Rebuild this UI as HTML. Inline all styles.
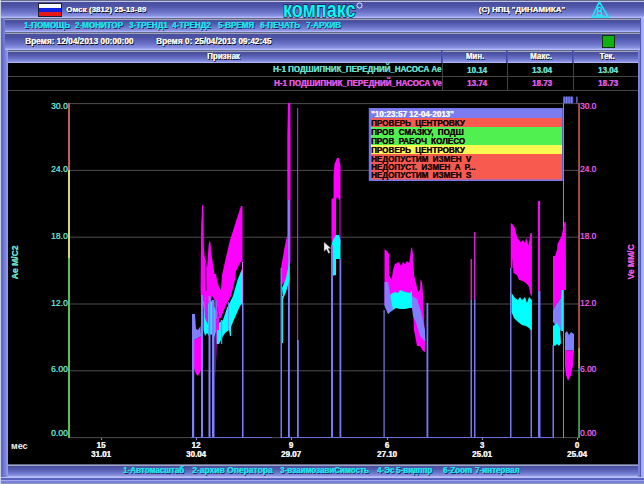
<!DOCTYPE html>
<html><head><meta charset="utf-8">
<style>
html,body{margin:0;padding:0;}
body{width:644px;height:484px;overflow:hidden;position:relative;background:#6c72c8;font-family:"Liberation Sans",sans-serif;}
.a{position:absolute;}
.band{background:linear-gradient(to bottom,#646a8c 0px,#646a8c 1px,#9ea2ba 1px,#9ea2ba 2px,#4a509c 2px,#4c52a4 30%,#6a72c8 65%,#8890e0 88%,#a8b0f6 94%,#b8c0fa 100%);}
.t{position:absolute;white-space:pre;font-weight:bold;line-height:1;font-size:9px;transform:scaleX(.89);transform-origin:0 0;}
.s8{font-size:8px;transform:none;}
.wh{color:#f4f4f4;text-shadow:0.3px 0 0 #f4f4f4,1px 1px 0 #080810,-0.5px 0 0 #202030;}
.cy{color:#20e0ea;text-shadow:0.4px 0 0 #20e0ea,1px 1px 0 #1c2460;}
.lc{color:#64dccc;}
.t.lc,.t.mg{text-shadow:0.35px 0 0 currentColor;}
.mg{color:#e058e0;}
.ax{position:absolute;white-space:pre;line-height:1;font-size:9px;text-shadow:0.3px 0 0 currentColor;}
.xl{position:absolute;white-space:pre;line-height:1;font-size:9px;font-weight:bold;color:#f0f0f0;text-shadow:0.3px 0 0 #f0f0f0;width:40px;text-align:center;transform:scaleX(.89);}
.lg{position:absolute;white-space:pre;line-height:1;font-size:9px;font-weight:bold;color:#1a0606;left:370.5px;word-spacing:2.2px;transform:scaleX(.9);transform-origin:0 0;text-shadow:0.2px 0 0 #1a0606;}
</style></head><body>
<!-- left/right frame -->

<div class="a" style="left:1px;top:0;width:7px;height:484px;background:linear-gradient(to right,#5a60c4,#7a80dc 60%,#9aa0ee)"></div>
<div class="a" style="left:638px;top:0;width:6px;height:484px;background:linear-gradient(to right,#8088de 0,#7078d4 2px,#5058b8 2px,#5058b8 3px,#a0a8f2 3px,#b0b8f6 100%)"></div>
<div class="a" style="left:0;top:0;width:1px;height:484px;background:#c8d0dc;z-index:5"></div>
<!-- top band -->
<div class="a band" style="left:0;top:0;width:644px;height:18px"></div>
<div class="a" style="left:0;top:1px;width:644px;height:1px;background:#c0c4e4"></div>
<!-- menu band -->
<div class="a band" style="left:5px;top:18px;width:635px;height:14px"></div>
<!-- time band -->
<div class="a band" style="left:5px;top:32px;width:635px;height:18px"></div>
<!-- table header band -->
<div class="a band" style="left:8px;top:50px;width:630px;height:13px"></div>


<svg class="a" style="left:0;top:0" width="644" height="20" viewBox="0 0 644 20">
<text x="283" y="17" font-family="Liberation Sans" font-weight="bold" font-size="22" textLength="72.5" lengthAdjust="spacingAndGlyphs" fill="#10f4f4" stroke="#141a48" stroke-width="1.6" paint-order="stroke">компакс</text>
<circle cx="359.5" cy="5.5" r="2.6" fill="none" stroke="#e0f8ff" stroke-width="0.9"/>
<polygon points="599.4,1.8 608.4,17.3 592,17.3" fill="none" stroke="#20e4f4" stroke-width="1.6"/>
<circle cx="599.4" cy="9.2" r="1.9" fill="none" stroke="#20eaf2" stroke-width="1.3"/>
<circle cx="599.4" cy="13" r="2.2" fill="none" stroke="#20eaf2" stroke-width="1.3"/>
<rect x="595.5" y="15" width="8" height="1.5" fill="#20eaf2"/>
</svg>
<!-- flag -->
<div class="a" style="left:38px;top:3px;width:24px;height:14px;background:#202030"></div>
<div class="a" style="left:39px;top:4px;width:22px;height:4px;background:#f8f8f8"></div>
<div class="a" style="left:39px;top:8px;width:22px;height:4px;background:#1020e0"></div>
<div class="a" style="left:39px;top:12px;width:22px;height:4px;background:#e81818"></div>

<div class="t wh s8" style="left:66px;top:6px;">Омск (3812) 25-13-89</div>
<div class="t wh s8" style="left:478.5px;top:6px;">(С) НПЦ "ДИНАМИКА"</div>
<div class="t cy" style="left:24px;top:21px;">1-ПОМОЩЬ</div>
<div class="t cy" style="left:75px;top:21px;">2-МОНИТОР</div>
<div class="t cy" style="left:129px;top:21px;">3-ТРЕНД1</div>
<div class="t cy" style="left:172px;top:21px;">4-ТРЕНД2</div>
<div class="t cy" style="left:218px;top:21px;">5-ВРЕМЯ</div>
<div class="t cy" style="left:260px;top:21px;">6-ПЕЧАТЬ</div>
<div class="t cy" style="left:306px;top:21px;">7-АРХИВ</div>
<div class="t wh" style="left:25px;top:37px;transform:scaleX(.92);">Время: 12/04/2013 00:00:00</div>
<div class="t wh" style="left:156px;top:37px;transform:scaleX(.92);">Время 0: 25/04/2013 09:42:45</div>
<div class="a" style="left:602px;top:35px;width:13px;height:13px;background:#103010"></div>
<div class="a" style="left:603px;top:36px;width:11px;height:11px;background:#10b010"></div>

<!-- table -->
<div class="a" style="left:8px;top:63px;width:630px;height:28px;background:#000"></div>
<div class="a" style="left:8px;top:76px;width:630px;height:1px;background:#444"></div>
<div class="a" style="left:8px;top:90px;width:630px;height:1px;background:#444"></div>
<div class="a" style="left:441px;top:50px;width:2px;height:13px;background:linear-gradient(to right,#3c42a0,#5a62c0)"></div><div class="a" style="left:442px;top:63px;width:1px;height:28px;background:#444"></div>
<div class="a" style="left:506px;top:50px;width:2px;height:13px;background:linear-gradient(to right,#3c42a0,#5a62c0)"></div><div class="a" style="left:507px;top:63px;width:1px;height:28px;background:#444"></div>
<div class="a" style="left:572px;top:50px;width:2px;height:13px;background:linear-gradient(to right,#3c42a0,#5a62c0)"></div><div class="a" style="left:573px;top:63px;width:1px;height:28px;background:#444"></div>
<div class="t wh" style="left:207px;top:52px;">Признак</div>
<div class="t wh" style="left:443px;top:52px;width:64px;text-align:center;transform-origin:50% 0;">Мин.</div>
<div class="t wh" style="left:509px;top:52px;width:64px;text-align:center;transform-origin:50% 0;">Макс.</div>
<div class="t wh" style="left:575px;top:52px;width:64px;text-align:center;transform-origin:50% 0;">Тек.</div>
<div class="t lc" style="left:272.5px;top:64.5px;transform:scaleX(.885);">Н-1 ПОДШИПНИК_ПЕРЕДНИЙ_НАСОСА Ae</div>
<div class="t mg" style="left:273.5px;top:78.5px;transform:scaleX(.885);">Н-1 ПОДШИПНИК_ПЕРЕДНИЙ_НАСОСА Ve</div>
<div class="t lc" style="left:445px;top:65.5px;width:64px;text-align:center;transform-origin:50% 0;">10.14</div>
<div class="t lc" style="left:510px;top:65.5px;width:64px;text-align:center;transform-origin:50% 0;">13.04</div>
<div class="t lc" style="left:576px;top:65.5px;width:64px;text-align:center;transform-origin:50% 0;">13.04</div>
<div class="t mg" style="left:445px;top:78.5px;width:64px;text-align:center;transform-origin:50% 0;">13.74</div>
<div class="t mg" style="left:510px;top:78.5px;width:64px;text-align:center;transform-origin:50% 0;">18.73</div>
<div class="t mg" style="left:576px;top:78.5px;width:64px;text-align:center;transform-origin:50% 0;">18.73</div>

<!-- chart bg -->
<div class="a" style="left:8px;top:91px;width:630px;height:373px;background:#000"></div>
<!-- bottom band -->
<div class="a band" style="left:8px;top:464px;width:630px;height:13px"></div>
<div class="a" style="left:0px;top:476.5px;width:644px;height:7.5px;background:linear-gradient(to bottom,#b8c0f6 0,#b8c0f6 1.5px,#5a62c0 1.5px,#5a62c0 3px,#a0a8f0 3px,#a0a8f0 4.5px,#7880d8 4.5px,#7880d8 6.5px,#9096b8 6.5px)"></div>
<div class="t cy" style="left:123px;top:465.5px;">1-Автомасштаб</div>
<div class="t cy" style="left:192px;top:465.5px;transform:scaleX(.945);">2-архив Оператора</div>
<div class="t cy" style="left:280px;top:465.5px;">3-взаимозавиСимость</div>
<div class="t cy" style="left:377px;top:465.5px;">4-Эс</div>
<div class="t cy" style="left:396px;top:465.5px;">5-вид</div>
<div class="t cy" style="left:413px;top:465.5px;">аппр</div>
<div class="t cy" style="left:443px;top:465.5px;">6-Zoom</div>
<div class="t cy" style="left:475px;top:465.5px;">7-интервал</div>

<!-- axis labels -->
<div class="ax lc" style="left:51px;transform:scaleX(.95);transform-origin:0 0;top:102px;">30.0</div>
<div class="ax lc" style="left:51px;transform:scaleX(.95);transform-origin:0 0;top:165px;">24.0</div>
<div class="ax lc" style="left:51px;transform:scaleX(.95);transform-origin:0 0;top:232px;">18.0</div>
<div class="ax lc" style="left:51px;transform:scaleX(.95);transform-origin:0 0;top:299px;">12.0</div>
<div class="ax lc" style="left:51px;transform:scaleX(.95);transform-origin:0 0;top:365px;">6.00</div>
<div class="ax lc" style="left:51px;transform:scaleX(.95);transform-origin:0 0;top:429px;">0.00</div>
<div class="ax mg" style="left:579.5px;transform:scaleX(.92);transform-origin:0 0;top:102px;">30.0</div>
<div class="ax mg" style="left:579.5px;transform:scaleX(.92);transform-origin:0 0;top:165px;">24.0</div>
<div class="ax mg" style="left:579.5px;transform:scaleX(.92);transform-origin:0 0;top:232px;">18.0</div>
<div class="ax mg" style="left:579.5px;transform:scaleX(.92);transform-origin:0 0;top:299px;">12.0</div>
<div class="ax mg" style="left:579.5px;transform:scaleX(.92);transform-origin:0 0;top:365px;">6.00</div>
<div class="ax mg" style="left:579.5px;transform:scaleX(.92);transform-origin:0 0;top:429px;">0.00</div>
<div class="t lc" style="left:-3.5px;top:258px;transform:rotate(-90deg) scaleX(.95);transform-origin:center;width:36px;text-align:center;">Ae М/С2</div>
<div class="t mg" style="left:613px;top:258px;transform:rotate(-90deg) scaleX(.95);transform-origin:center;width:36px;text-align:center;">Ve ММ/С</div>
<div class="t s8" style="left:11px;top:442px;color:#f0f0f0;font-size:9px;">мес</div>
<div class="xl" style="left:81px;top:441px;">15</div>
<div class="xl" style="left:81px;top:450px;">31.01</div>
<div class="xl" style="left:176px;top:441px;">12</div>
<div class="xl" style="left:176px;top:450px;">30.04</div>
<div class="xl" style="left:271px;top:441px;">9</div>
<div class="xl" style="left:271px;top:450px;">29.07</div>
<div class="xl" style="left:367px;top:441px;">6</div>
<div class="xl" style="left:367px;top:450px;">27.10</div>
<div class="xl" style="left:462px;top:441px;">3</div>
<div class="xl" style="left:462px;top:450px;">25.01</div>
<div class="xl" style="left:557px;top:441px;">0</div>
<div class="xl" style="left:557px;top:450px;">25.04</div>

<svg class="a" style="left:0;top:0" width="644" height="484" viewBox="0 0 644 484">
<!-- gridlines -->
<g fill="#4c4c4c">
<rect x="69" y="103.1" width="510" height="1"/>
<rect x="69" y="169.9" width="510" height="1"/>
<rect x="69" y="236.7" width="510" height="1"/>
<rect x="69" y="303.5" width="510" height="1"/>
<rect x="69" y="370.3" width="510" height="1"/>
<rect x="69" y="437.1" width="510" height="1"/>
</g>
<!-- ticks -->
<g fill="#909090">
<rect x="101" y="438" width="1" height="2"/>
<rect x="196" y="438" width="1" height="2"/>
<rect x="291" y="438" width="1" height="2"/>
<rect x="387" y="438" width="1" height="2"/>
<rect x="482" y="438" width="1" height="2"/>
<rect x="577" y="438" width="1" height="2"/>
</g>
<!-- left axis -->
<rect x="68" y="103" width="2" height="67" fill="#c05c5c"/>
<rect x="68" y="170" width="2" height="88" fill="#d8d86c"/>
<rect x="68" y="258" width="2" height="180" fill="#5cbc5c"/>
<!-- right axis -->
<rect x="578.3" y="103" width="1.5" height="245" fill="#d86454"/>
<rect x="578.3" y="348" width="1.5" height="20" fill="#d8d86c"/>
<rect x="578.3" y="368" width="1.5" height="70" fill="#5cbc5c"/>

<rect x="563" y="103" width="1" height="335" fill="#909090"/>
<!-- DATA -->
<g id="data">
<!-- zero line -->
<rect x="191" y="437" width="81" height="1" fill="#6c6ce0"/>
<rect x="280" y="437" width="274" height="1" fill="#6c6ce0"/>
<!-- cluster A -->
<polygon fill="#ff00ff" points="202.2,205 203.3,205 203.7,240 204,250 204.5,255.5 205,258 206,262 207,268 208,255 208.5,246 209.4,241 210.5,243 211,250 212,258 213,265 214.5,274 216,274 217,280 219,287 221,290 222,275 224,266 230,240 241,206 242.5,206 242.5,262 240.5,262 236,271 235,280 231,296 226,305 221,318 219,318 216,300 214.6,300 212,296 208,312 205,312 201,298 200.6,290 200.8,260 201.2,225"/>
<polygon fill="#000000" points="205.2,262 206.2,266 206.5,290 205.6,292 205.2,275"/>
<polygon fill="#00ffff" points="242.5,268 242.5,303 240,306 236,315 233,322 231,327 231,336 230,336 229,330 225,333 222,338 219,344 216.5,344 216.5,325 220,322 223,320 227,308 233,296 237.5,280 241.5,270"/>
<polygon fill="#00ffff" points="203.5,302 206,297 208,304 211,300 214,306 216.5,312 216.5,330 214,338 211,334 209,336 207,333 205,336 203.5,330"/>
<polygon fill="#ff00ff" points="194,340 201,336 201,370 198,376 196,374 194,368"/>
<polygon fill="#ff00ff" points="216,300 219,318 219,330 217,330 215.5,382 215.5,300"/>
<polygon fill="#ff00ff" points="204,300 208,296 208,325 205,318"/>
<g fill="#8080ff">
<rect x="192" y="314" width="2.2" height="123"/>
<polygon points="194,314 195,314 196,329 198,330 200.5,326 201,336 194,340"/>
<rect x="201" y="295" width="2" height="142"/>
<rect x="208.5" y="296" width="2" height="141"/>
<rect x="212" y="300" width="2.5" height="137"/>
<rect x="215.5" y="300" width="1.2" height="18"/>
<rect x="242" y="303" width="1.5" height="134"/>
<rect x="221" y="320" width="1.2" height="24"/>
<rect x="228" y="302" width="0.8" height="28"/>
</g>
<rect x="242" y="262" width="1.2" height="41" fill="#e070f0"/>
<!-- cluster B -->
<polygon fill="#ff00ff" points="288,103 290.3,103 290.5,136 290.5,262 286,280 282,285 281,268 285,245 287.3,235 287.3,136"/>
<rect x="288" y="200" width="1.8" height="237" fill="#8080ff"/>
<polygon fill="#00ffff" points="289.5,261 289.5,280 286,292 283,299 282,288 286,278"/>
<rect x="280.5" y="268" width="1.5" height="169" fill="#7878f0"/>
<rect x="297" y="108" width="1.2" height="232" fill="#b028c0"/>
<rect x="297" y="340" width="1.8" height="97" fill="#7878f0"/>
<rect x="282" y="296" width="1.2" height="47" fill="#30e0f0"/>
<polygon fill="#ff00ff" points="331.5,245 331.5,199 333.6,198 333.6,175 334.5,164 337,158 339,158 340.5,166 340.5,245 339.5,245 339.5,200 337,197 336,200 336,236"/>
<polygon fill="#00ffff" points="333,240 336,235 339,235 340.5,240 340.5,259 336,259 336,275 331.5,276 331.5,245"/>
<rect x="331" y="245" width="2" height="192" fill="#7878f0"/>
<rect x="339.5" y="259" width="1.8" height="178" fill="#7878f0"/>
<!-- cluster C -->
<polygon fill="#ff00ff" points="384.5,249 387,251 389,254 389,275 391.5,280 393,270 395,264 397,263 399,262 401,266 403,262 405,264 407,261 409,263 410,258 411,249 412,247 413,254 414,275 416,283 418,292 420,290 420.5,279 422,282 423,294 425,340 425,352 423,351 420,346 417,346 414,330 413,310 412,307 384.5,305"/>
<polygon fill="#00ffff" points="388,300 391,294 395,292 398,293 400,290 405,292 410,293 412,290 412,308 410,308 405,309 400,309 396,308 393,310 390,312 388,314"/>
<polygon fill="#8080ff" points="412,296 417,299 421,312 425,330 425.5,342 420,336 416,322 413,316 412,308"/>
<polygon fill="#8080ff" points="384.5,282 388,282 393,310 390,312 388,314 384.5,306"/>
<rect x="383.5" y="310" width="1.2" height="127" fill="#7878f0"/>
<rect x="426.5" y="303" width="1.8" height="134" fill="#7878f0"/>
<!-- 471-475 -->
<rect x="470.5" y="259" width="1.5" height="41" fill="#d020d0"/>
<rect x="470.5" y="300" width="1.5" height="137" fill="#7878f0"/>
<rect x="474" y="232" width="1.5" height="68" fill="#d020d0"/>
<rect x="474" y="300" width="1.5" height="137" fill="#7878f0"/>
<!-- cluster D -->
<polygon fill="#ff00ff" points="510.7,223.5 512,223.5 513,225 515,228 516,233 517,237 519,240 521,242 523,240 525,243 526,238 527.5,241 528.5,246 530,236 530.5,233 531.9,233 531.9,296 530.5,295 529,287 527,284 523,281 519,280 517,275 513.5,273 512.5,258 512.5,268 510.7,268"/>
<polygon fill="#00ffff" points="511.5,293 515,298 518,300 520,297 522,300 525,297 527,303 529,297 531.9,300 531.9,332 529,328 526,326 522,325 518,322 514,318 511.5,312"/>
<rect x="510" y="268" width="1.5" height="169" fill="#7878f0"/>
<rect x="530.5" y="330" width="1.5" height="107" fill="#7878f0"/>
<rect x="538" y="201" width="2" height="90" fill="#ff00ff"/>
<rect x="538" y="291" width="2.5" height="146" fill="#7878f0"/>
<polygon fill="#ff00ff" points="564.5,222 565.8,222 566,290 562,290 561,298 558,302 556,305 553,310 553,256 555,256 557,250 557.5,244 561.5,236"/>
<polygon fill="#8080ff" points="553,310 556,305 558,302 561,298 562,290 563,290 563,331 561,331 553,322"/>
<polygon fill="#00ffff" points="553,326 557,323 560,328 561,343 559,346 557,344 555,346 553,345"/>
<rect x="561.5" y="290" width="1.5" height="41" fill="#00ffff"/>
<polygon fill="#8080ff" points="565,333 567,331 569,335 571,332 574,334 574,350.5 565,350.5"/>
<polygon fill="#ff00ff" points="565,350.5 574,350.5 573,365 571,375 568,381 566,375 565,365"/>
<rect x="552.5" y="345" width="1.5" height="92" fill="#7878f0"/>
<!-- mouse cursor -->
<polygon fill="#f0f0f0" stroke="#404040" stroke-width="0.4" points="324,242 324,251.5 326.3,249.3 328.6,253.5 330.2,252.7 328.2,248.6 331.2,248.6"/>
</g>


<!-- legend -->
<rect x="368.8" y="108" width="194" height="73" fill="#7474ec"/>
<rect x="371" y="109" width="191" height="9" fill="#7a7cf0"/>
<rect x="371" y="118" width="191" height="9" fill="#f85a50"/>
<rect x="371" y="127" width="191" height="18" fill="#50f050"/>
<rect x="371" y="145" width="191" height="9" fill="#f8f850"/>
<rect x="371" y="154" width="191" height="25.5" fill="#f85a50"/>
<rect x="563.3" y="96.6" width="10" height="6.6" fill="#4c50b8"/><g fill="#7c80f0"><rect x="563.5" y="96.6" width="1.3" height="6.6"/><rect x="566" y="96.6" width="1.3" height="6.6"/><rect x="568.5" y="96.6" width="1.3" height="6.6"/><rect x="571" y="96.6" width="1.3" height="6.6"/><rect x="576.3" y="96.6" width="1.2" height="6.6"/></g>
</svg>
<div class="lg" style="top:110px;color:#f8f8f8;word-spacing:0;text-shadow:0.3px 0 0 #f8f8f8;transform:scaleX(.89)">"10:23:57 12-04-2013"</div>
<div class="lg" style="top:118.5px;">ПРОВЕРЬ ЦЕНТРОВКУ</div>
<div class="lg" style="top:127.5px;">ПРОВ СМАЗКУ, ПОДШ</div>
<div class="lg" style="top:136.5px;">ПРОВ РАБОЧ КОЛЕСО</div>
<div class="lg" style="top:145.5px;">ПРОВЕРЬ ЦЕНТРОВКУ</div>
<div class="lg" style="top:154.5px;">НЕДОПУСТИМ ИЗМЕН V</div>
<div class="lg" style="top:163px;">НЕДОПУСТ. ИЗМЕН А Р...</div>
<div class="lg" style="top:170.5px;">НЕДОПУСТИМ ИЗМЕН S</div>
</body></html>
